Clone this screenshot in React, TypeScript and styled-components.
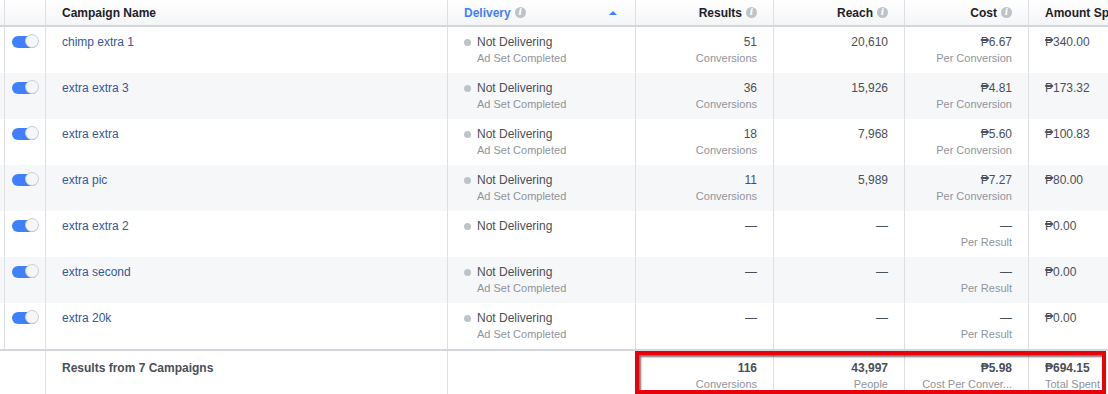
import styled, { createGlobalStyle } from "styled-components";

const GlobalStyle = createGlobalStyle`
  body {
    margin: 0;
    background: #fff;
    font-family: "Liberation Sans", Arial, sans-serif;
    overflow: hidden;
  }
`;

type Campaign = {
  name: string;
  sub: boolean;
  results: string;
  reach: string;
  cost: string;
  costLabel: string;
  spent: string;
};

const campaigns: Campaign[] = [
  { name: "chimp extra 1", sub: true, results: "51", reach: "20,610", cost: "₱6.67", costLabel: "Per Conversion", spent: "₱340.00" },
  { name: "extra extra 3", sub: true, results: "36", reach: "15,926", cost: "₱4.81", costLabel: "Per Conversion", spent: "₱173.32" },
  { name: "extra extra", sub: true, results: "18", reach: "7,968", cost: "₱5.60", costLabel: "Per Conversion", spent: "₱100.83" },
  { name: "extra pic", sub: true, results: "11", reach: "5,989", cost: "₱7.27", costLabel: "Per Conversion", spent: "₱80.00" },
  { name: "extra extra 2", sub: false, results: "—", reach: "—", cost: "—", costLabel: "Per Result", spent: "₱0.00" },
  { name: "extra second", sub: true, results: "—", reach: "—", cost: "—", costLabel: "Per Result", spent: "₱0.00" },
  { name: "extra 20k", sub: true, results: "—", reach: "—", cost: "—", costLabel: "Per Result", spent: "₱0.00" },
];

const COLS = "4px 41px 402px 188px 138px 131px 124px 140px";

export default function App() {
  return (
    <>
      <GlobalStyle />
      <Table>
        <HeadRow>
          <Cell $first />
          <Cell />
          <HeadCell>Campaign Name</HeadCell>
          <HeadCell $active>
            Delivery <Info>i</Info>
            <SortArrow />
          </HeadCell>
          <HeadCell $right>
            Results <Info>i</Info>
          </HeadCell>
          <HeadCell $right>
            Reach <Info>i</Info>
          </HeadCell>
          <HeadCell $right>
            Cost <Info>i</Info>
          </HeadCell>
          <HeadCell>Amount Spent</HeadCell>
        </HeadRow>

        {campaigns.map((c, i) => (
          <Row key={c.name} $alt={i % 2 === 1}>
            <Cell $first />
            <ToggleCell>
              <Toggle>
                <Knob />
              </Toggle>
            </ToggleCell>
            <TextCell>
              <NameLink>{c.name}</NameLink>
            </TextCell>
            <TextCell>
              <Status>
                <Dot />
                Not Delivering
              </Status>
              {c.sub && <Sub $indent>Ad Set Completed</Sub>}
            </TextCell>
            <TextCell $right>
              <Value>{c.results}</Value>
              {c.results !== "—" && <Sub>Conversions</Sub>}
            </TextCell>
            <TextCell $right>
              <Value>{c.reach}</Value>
            </TextCell>
            <TextCell $right>
              <Value>{c.cost}</Value>
              <Sub>{c.costLabel}</Sub>
            </TextCell>
            <TextCell>
              <Value>{c.spent}</Value>
            </TextCell>
          </Row>
        ))}

        <FootRow>
          <Cell $first $noLine />
          <Cell $noLine />
          <FootCell>
            <Strong>Results from 7 Campaigns</Strong>
          </FootCell>
          <FootCell />
          <FootCell $right>
            <Strong>116</Strong>
            <Sub>Conversions</Sub>
          </FootCell>
          <FootCell $right>
            <Strong>43,997</Strong>
            <Sub>People</Sub>
          </FootCell>
          <FootCell $right>
            <Strong>₱5.98</Strong>
            <Sub>Cost Per Conver...</Sub>
          </FootCell>
          <FootCell>
            <Strong>₱694.15</Strong>
            <Sub>Total Spent</Sub>
          </FootCell>
          <Highlight />
        </FootRow>
      </Table>
    </>
  );
}

const Table = styled.div`
  width: 1168px;
  font-size: 12px;
  color: #4b4f56;
`;

const Grid = styled.div`
  display: grid;
  grid-template-columns: ${COLS};
`;

const HeadRow = styled(Grid)`
  height: 25px;
  background: linear-gradient(#ffffff, #f4f5f7);
  border-bottom: 2px solid #d3d6db;
`;

const Row = styled(Grid)<{ $alt?: boolean }>`
  height: 46px;
  background: ${(p) => (p.$alt ? "#f6f7f9" : "#ffffff")};
`;

const FootRow = styled(Grid)`
  position: relative;
  height: 46px;
  border-top: 2px solid #d3d6db;
  background: #fff;
`;

const Cell = styled.div<{ $first?: boolean; $noLine?: boolean }>`
  border-left: ${(p) => (p.$first || p.$noLine ? "none" : "1px solid #dddfe2")};
  box-sizing: border-box;
  min-width: 0;
`;

const HeadCell = styled(Cell)<{ $right?: boolean; $active?: boolean }>`
  display: flex;
  align-items: center;
  justify-content: ${(p) => (p.$right ? "flex-end" : "flex-start")};
  gap: 4px;
  padding: 0 16px;
  font-weight: bold;
  white-space: nowrap;
  overflow: hidden;
  color: ${(p) => (p.$active ? "#4080ff" : "#1d2129")};
`;

const Info = styled.span`
  display: inline-flex;
  align-items: center;
  justify-content: center;
  width: 11px;
  height: 11px;
  border-radius: 50%;
  background: #bec3c9;
  color: #fff;
  font-family: "DejaVu Serif", serif;
  font-size: 9px;
  font-style: italic;
  font-weight: bold;
  line-height: 1;
`;

const SortArrow = styled.span`
  margin-left: auto;
  margin-right: 2px;
  width: 0;
  height: 0;
  border-left: 4px solid transparent;
  border-right: 4px solid transparent;
  border-bottom: 4px solid #4080ff;
`;

const ToggleCell = styled(Cell)`
  display: flex;
  justify-content: center;
  padding-top: 8px;
`;

const Toggle = styled.div`
  position: relative;
  width: 26px;
  height: 12px;
  margin-top: 1px;
  border-radius: 7px;
  background: #4080ff;
`;

const Knob = styled.div`
  position: absolute;
  right: -1px;
  top: -2px;
  width: 14px;
  height: 14px;
  border-radius: 50%;
  background: #f5f6f7;
  border: 1px solid #ccd0d5;
  box-sizing: border-box;
`;

const TextCell = styled(Cell)<{ $right?: boolean }>`
  padding: 7px 16px 0;
  text-align: ${(p) => (p.$right ? "right" : "left")};
  white-space: nowrap;
  overflow: hidden;
`;

const FootCell = styled(TextCell)`
  padding-top: 9px;
`;

const NameLink = styled.div`
  color: #365899;
  line-height: 16px;
`;

const Status = styled.div`
  display: flex;
  align-items: center;
  gap: 6px;
  line-height: 16px;
`;

const Dot = styled.span`
  width: 7px;
  height: 7px;
  border-radius: 50%;
  background: #bec3c9;
`;

const Value = styled.div`
  line-height: 16px;
`;

const Strong = styled.div`
  line-height: 16px;
  font-weight: bold;
`;

const Sub = styled.div<{ $indent?: boolean }>`
  color: #90949c;
  font-size: 11px;
  line-height: 16px;
  padding-left: ${(p) => (p.$indent ? "13px" : "0")};
`;

const Highlight = styled.div`
  position: absolute;
  left: 635px;
  top: 0;
  width: 471px;
  height: 44px;
  box-sizing: border-box;
  border: 4px solid #e8000b;
  border-bottom-width: 5px;
  box-shadow: inset 2px 2px 2px rgba(0, 0, 0, 0.55);
  pointer-events: none;
`;
